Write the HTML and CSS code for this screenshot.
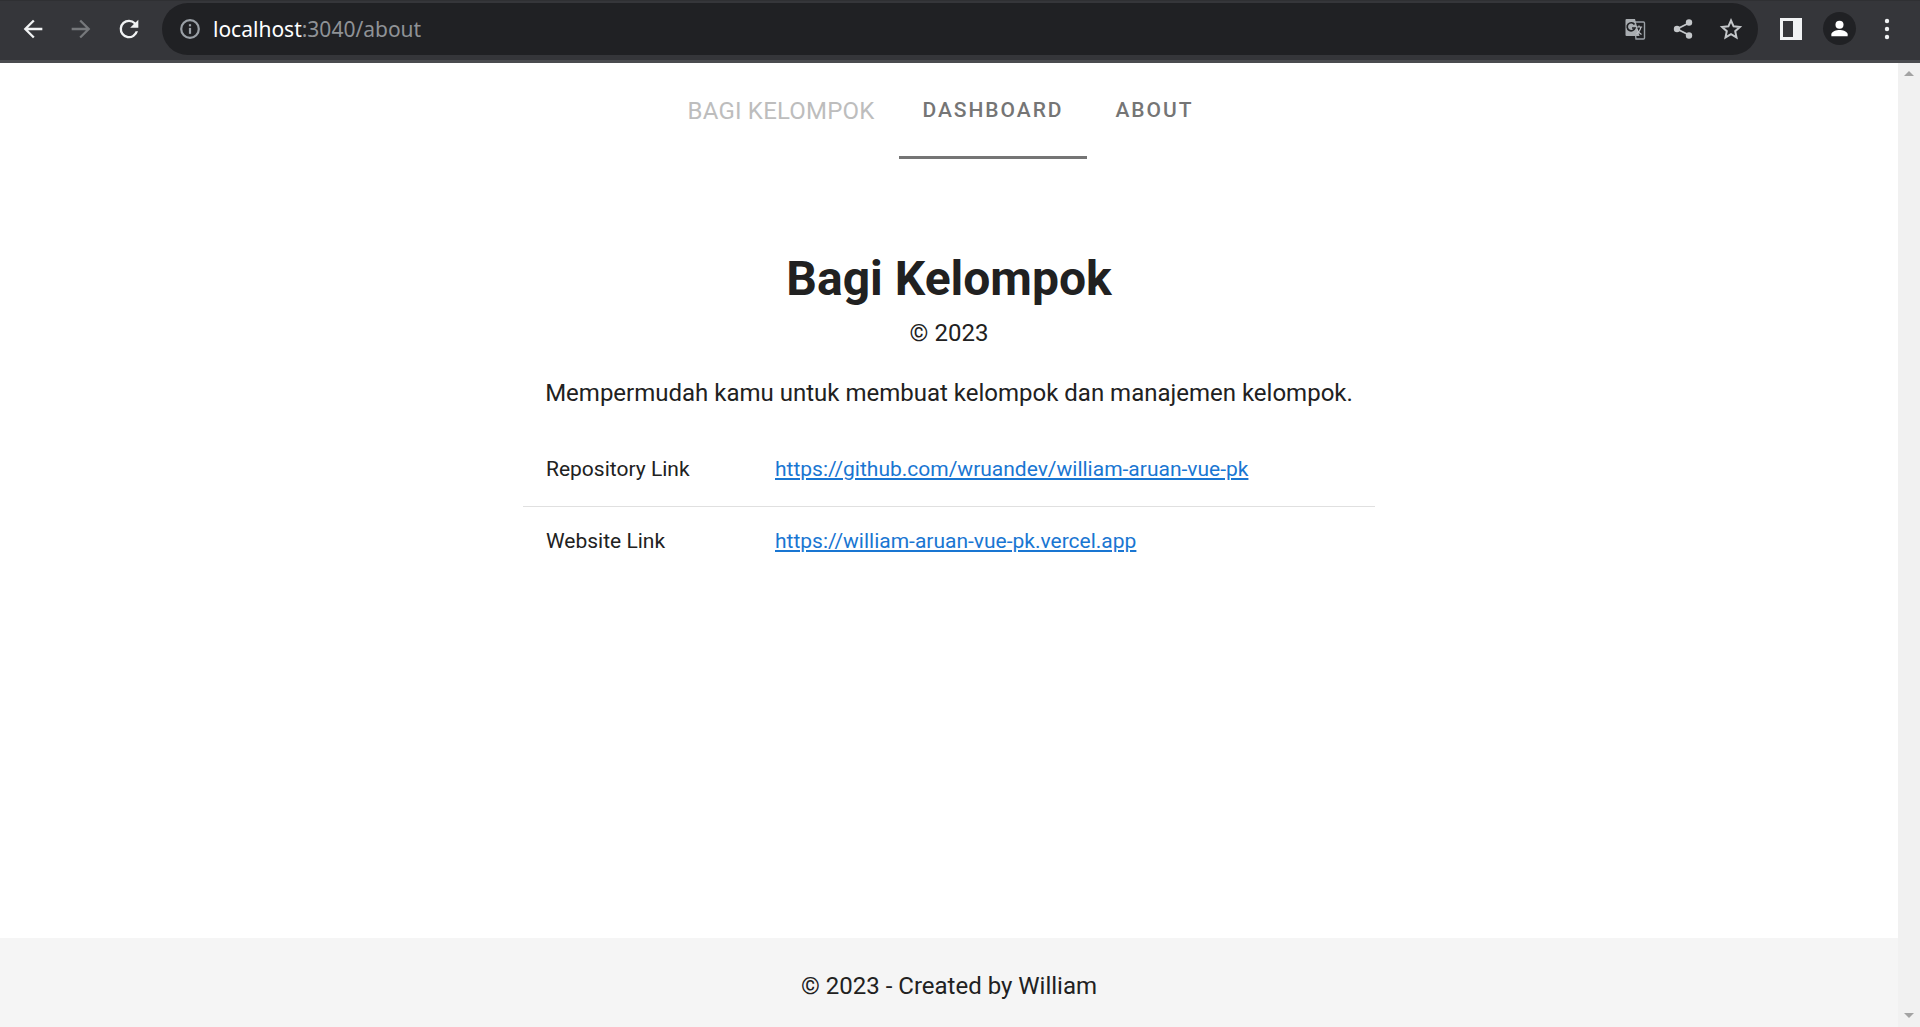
FILE: index.html
```html
<!DOCTYPE html>
<html lang="en">
<head>
    <meta charset="UTF-8">
    <meta name="viewport" content="width=device-width, initial-scale=1.0">
    <title>Bagi Kelompok</title>
    <link rel="stylesheet" href="styles.css">
</head>
<body>
    <div class="toolbar">
        <div class="nav-buttons">
            <svg class="tool-icon" viewBox="0 0 24 24"><path d="M20 11H7.8l5.6-5.6L12 4l-8 8 8 8 1.4-1.4L7.8 13H20z" fill="#f1f3f4"/></svg>
            <svg class="tool-icon" viewBox="0 0 24 24"><path d="M4 11h12.2l-5.6-5.6L12 4l8 8-8 8-1.4-1.4 5.6-5.6H4z" fill="#76787b"/></svg>
            <svg class="tool-icon" viewBox="0 0 24 24"><path d="M17.65 6.35A7.95 7.95 0 0 0 12 4a8 8 0 1 0 7.73 10h-2.08A6 6 0 1 1 12 6c1.66 0 3.14.69 4.22 1.78L13 11h7V4z" fill="#f1f3f4"/></svg>
        </div>
        <div class="omnibox">
            <svg class="info-icon" viewBox="0 0 20 20"><circle cx="10" cy="10" r="8" fill="none" stroke="#9aa0a6" stroke-width="2"/><rect x="9" y="9" width="2" height="5.4" fill="#9aa0a6"/><rect x="9" y="5.6" width="2" height="2" fill="#9aa0a6"/></svg>
            <span class="url"><span class="url-host">localhost</span>:3040/about</span>
            <div class="omni-actions">
                <svg class="omni-icon" viewBox="0 0 24 24"><path d="M11 5h9.5a1 1 0 0 1 1 1v15a1 1 0 0 1-1 1H13z" fill="none" stroke="#9aa0a6" stroke-width="1.4"/><path d="M3.5 2H12l4.5 17H3.5a1 1 0 0 1-1-1V3a1 1 0 0 1 1-1z" fill="#a9adb1"/><path d="M12.6 10h6.6M16 8.5v1.5M18 10c-.6 3-2.4 5.6-4.5 7M14 12.5c.9 2 2.6 3.8 4.5 5" fill="none" stroke="#bdc1c6" stroke-width="1.2"/><path d="M11.5 7.5A4 4 0 1 0 12 11H9" fill="none" stroke="#202124" stroke-width="1.7"/></svg>
                <svg class="omni-icon" viewBox="0 0 24 24"><path d="M18 6 6 12l12 6" fill="none" stroke="#c4c7ca" stroke-width="1.8"/><circle cx="18" cy="5.5" r="3.2" fill="#c4c7ca"/><circle cx="6" cy="12" r="3.2" fill="#c4c7ca"/><circle cx="18" cy="18.5" r="3.2" fill="#c4c7ca"/></svg>
                <svg class="omni-icon" viewBox="0 0 24 24"><path d="m12 3.5 2.600 5.800 6.300.7-4.700 4.200 1.300 6.200L12 17.200l-5.500 3.200 1.300-6.200L3.100 10l6.300-.7z" fill="none" stroke="#c4c7ca" stroke-width="2"/></svg>
            </div>
        </div>
        <div class="side-buttons">
            <svg class="panel-icon" viewBox="0 0 22 22"><rect x="0" y="0" width="22" height="22" fill="#f1f3f4"/><rect x="3" y="3" width="10" height="16" fill="#35363a"/></svg>
            <div class="avatar"><svg viewBox="0 0 24 24"><circle cx="12" cy="8" r="4.2" fill="#fff"/><path d="M3.500 20v-2c0-3 5.500-4.500 8.500-4.500s8.500 1.500 8.500 4.500v2z" fill="#fff"/></svg></div>
            <svg class="menu-icon" viewBox="0 0 6 22"><circle cx="3" cy="3" r="2.2" fill="#f1f3f4"/><circle cx="3" cy="11" r="2.2" fill="#f1f3f4"/><circle cx="3" cy="19" r="2.2" fill="#f1f3f4"/></svg>
        </div>
    </div>

    <div class="viewport">
        <div class="page">
            <nav class="site-nav">
                <span class="brand">BAGI KELOMPOK</span>
                <a class="tab tab-active" href="#">Dashboard</a>
                <a class="tab" href="#">About</a>
            </nav>
            <main class="content">
                <h1>Bagi Kelompok</h1>
                <p class="year">© 2023</p>
                <p class="lead">Mempermudah kamu untuk membuat kelompok dan manajemen kelompok.</p>
                <table class="links">
                    <tr class="link-row-first">
                        <td class="link-label">Repository Link</td>
                        <td><a href="#">https://github.com/wruandev/william-aruan-vue-pk</a></td>
                    </tr>
                    <tr>
                        <td class="link-label">Website Link</td>
                        <td><a href="#">https://william-aruan-vue-pk.vercel.app</a></td>
                    </tr>
                </table>
            </main>
            <footer class="footer">© 2023 - Created by William</footer>
        </div>
        <div class="scrollbar">
            <span class="arrow-up"></span>
            <span class="arrow-down"></span>
        </div>
    </div>
</body>
</html>
```

FILE: styles.css
```css
* {
    box-sizing: border-box;
}
body {
    font-family: Roboto, sans-serif;
    margin: 0;
    height: 100vh;
    overflow: hidden;
    display: flex;
    flex-direction: column;
    background: #fff;
    color: #212121;
}
.toolbar {
    height: 63px;
    flex: none;
    display: flex;
    align-items: center;
    padding: 4px 0 8px;
    background: #35363a;
    border-top: 1px solid #2f3033;
    border-bottom: 3px solid #4a4b4f;
}
.nav-buttons {
    display: flex;
    align-items: center;
    gap: 20px;
    padding-left: 19px;
    width: 162px;
}
.tool-icon {
    width: 28px;
    height: 28px;
}
.omnibox {
    width: 1596px;
    height: 52px;
    margin-top: 1px;
    display: flex;
    align-items: center;
    background: #202124;
    border-radius: 26px;
    padding: 0 15px 0 17px;
}
.info-icon {
    width: 22px;
    height: 22px;
    margin-right: 12px;
}
.url {
    font-family: "Noto Sans", sans-serif;
    font-size: 21px;
    color: #8f9296;
}
.url-host {
    color: #fff;
}
.omni-actions {
    margin-left: auto;
    display: flex;
    align-items: center;
    gap: 24px;
}
.omni-icon {
    width: 24px;
    height: 24px;
}
.side-buttons {
    display: flex;
    align-items: center;
    margin-left: 22px;
}
.panel-icon {
    width: 22px;
    height: 22px;
}
.avatar {
    width: 33px;
    height: 33px;
    margin-left: 21px;
    border-radius: 50%;
    background: #202124;
    padding: 5px;
}
.avatar svg {
    display: block;
}
.menu-icon {
    width: 6px;
    height: 22px;
    margin-left: 28px;
}
.viewport {
    flex: 1;
    display: flex;
    min-height: 0;
}
.page {
    flex: 1;
    display: flex;
    flex-direction: column;
}
.site-nav {
    height: 96px;
    flex: none;
    display: flex;
    justify-content: center;
    align-items: flex-start;
    gap: 4px;
    padding-left: 7px;
}
.brand {
    font-size: 24px;
    font-weight: 400;
    letter-spacing: 0.2px;
    color: #bdbdbd;
    line-height: 96px;
    height: 96px;
    margin-right: 20px;
}
.tab {
    height: 96px;
    padding: 0 24px;
    line-height: 94px;
    font-size: 21px;
    font-weight: 500;
    letter-spacing: 1.95px;
    text-transform: uppercase;
    text-decoration: none;
    color: #757575;
}
.tab-active {
    border-bottom: 3px solid #757575;
}
.content {
    flex: 1;
    display: flex;
    flex-direction: column;
    align-items: center;
    padding-top: 88px;
}
h1 {
    font-size: 48px;
    font-weight: 700;
    line-height: 64px;
    margin: 0;
    color: #212121;
}
.year {
    font-size: 24px;
    line-height: 36px;
    margin: 4px 0 0;
}
.lead {
    font-size: 24px;
    line-height: 36px;
    margin: 24px 0 0;
}
.links {
    width: 852px;
    margin-top: 22px;
    border-collapse: collapse;
    font-size: 21px;
}
.links td {
    height: 69px;
    padding: 0 24px 0 23px;
}
.links .link-row-first td {
    height: 73px;
}
.links tr + tr td {
    border-top: 1px solid #e0e0e0;
}
.links .link-label {
    width: 229px;
}
.links a {
    color: #1976d2;
}
.footer {
    height: 89px;
    flex: none;
    display: flex;
    align-items: center;
    justify-content: center;
    padding-top: 6px;
    background: #f5f5f5;
    font-size: 24px;
}
.scrollbar {
    width: 22px;
    flex: none;
    display: flex;
    flex-direction: column;
    justify-content: space-between;
    align-items: center;
    padding: 8px 0 9px;
    background: #f1f1f1;
}
.arrow-up {
    border: 5px solid transparent;
    border-top: 0;
    border-bottom: 5px solid #a3a3a3;
}
.arrow-down {
    border: 5px solid transparent;
    border-bottom: 0;
    border-top: 5px solid #a3a3a3;
}
```
